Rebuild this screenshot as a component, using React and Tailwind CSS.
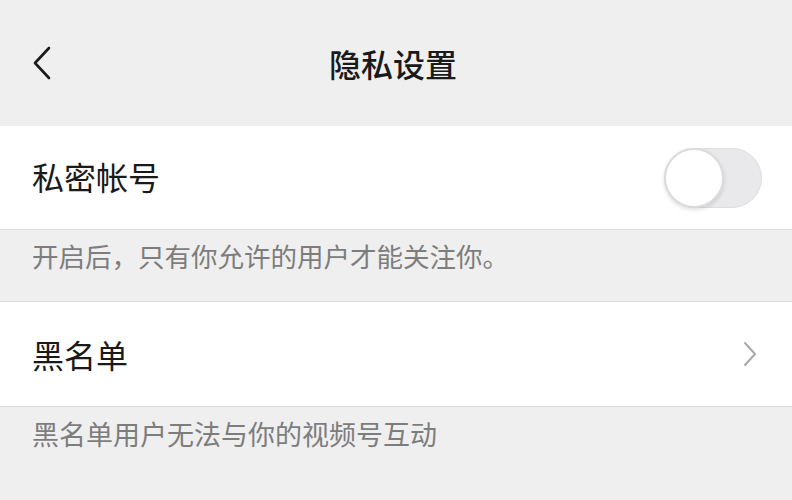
export default function App() {
  return (
    <div className="w-[792px] h-[500px] bg-[#efefef] overflow-hidden flex flex-col" style={{ fontFamily: '"Noto Sans CJK SC", "Noto Sans", sans-serif' }}>
      <div className="h-[126px] flex items-center relative shrink-0">
        <div className="pl-[30px] flex items-center">
          <svg width="24" height="36" viewBox="0 0 24 36" fill="none">
            <path d="M19 3 L5 18 L19 33" stroke="#1a1a1a" strokeWidth="2.6" strokeLinecap="round" strokeLinejoin="round" />
          </svg>
        </div>
        <div className="absolute inset-x-0 top-0 h-[126px] flex items-center justify-center pointer-events-none">
          <span className="text-[32px] leading-none text-[#1a1a1a] font-medium pr-[6px]">隐私设置</span>
        </div>
      </div>
      <div className="h-[104px] bg-white border-b border-[#dcdcdc] flex items-center justify-between pl-[32px] pr-[30px] shrink-0">
        <span className="text-[32px] leading-none text-[#1a1a1a] pb-[4px]">私密帐号</span>
        <div className="w-[98px] h-[60px] rounded-full bg-[#e9e9ec] border border-[#dedede] relative">
          <div className="absolute left-[-1px] top-[-1px] w-[60px] h-[60px] rounded-full bg-white border-[2px] border-[#dcdcdc] shadow-[0_2px_4px_rgba(0,0,0,0.12)]" />
        </div>
      </div>
      <div className="h-[72px] border-b border-[#dcdcdc] flex items-start pl-[32px] pt-[13px] shrink-0">
        <span className="text-[26.5px] leading-none text-[#7d7d7d]">开启后，只有你允许的用户才能关注你。</span>
      </div>
      <div className="h-[105px] bg-white border-b border-[#dcdcdc] flex items-center justify-between pl-[32px] pr-[34px] shrink-0">
        <span className="text-[32px] leading-none text-[#1a1a1a]">黑名单</span>
        <svg width="16" height="26" viewBox="0 0 16 26" fill="none">
          <path d="M3 2 L13 13 L3 24" stroke="#a8a8a8" strokeWidth="2" strokeLinecap="round" strokeLinejoin="round" />
        </svg>
      </div>
      <div className="flex pl-[32px] pt-[13px]">
        <span className="text-[27px] leading-none text-[#7d7d7d]">黑名单用户无法与你的视频号互动</span>
      </div>
    </div>
  );
}
